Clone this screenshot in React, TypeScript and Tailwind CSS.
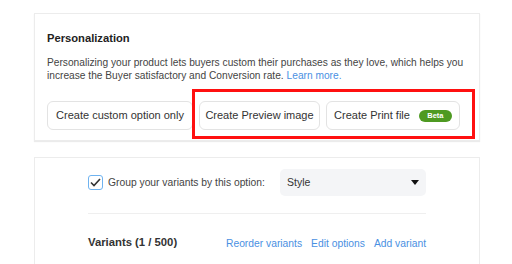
import React from "react";

const font = { fontFamily: '"Liberation Sans", Arial, sans-serif' };

const OptionButton: React.FC<{ label: string; width: string; badge?: boolean }> = ({
  label,
  width,
  badge,
}) => (
  <button
    className={`h-[29px] ${width} flex items-center justify-center gap-[9px] rounded-[6px] border border-[#e3e3e3] bg-white text-[11px] text-[#333] shrink-0`}
  >
    <span>{label}</span>
    {badge && (
      <span className="h-[12px] w-[33px] rounded-full bg-[#4e9a22] text-white text-[7.5px] font-bold leading-[12px] text-center">
        Beta
      </span>
    )}
  </button>
);

export default function App() {
  return (
    <div className="w-[512px] h-[264px] bg-white overflow-hidden" style={font}>
      <div className="pt-[13px] pl-[34px]">
        {/* Personalization card */}
        <div className="relative w-[446px] h-[128px] border border-[#ececec] shadow-[0_1px_1px_rgba(0,0,0,0.08)] bg-white px-[12px] pt-[16px]">
          <h2 className="text-[11.2px] leading-[16px] font-semibold text-[#222]">Personalization</h2>
          <p className="mt-[10px] text-[10.2px] leading-[13px] text-[#444] whitespace-nowrap">
            Personalizing your product lets buyers custom their purchases as they love, which helps you
            <br />
            increase the Buyer satisfactory and Conversion rate.{" "}
            <span className="text-[#4a90e2]">Learn more.</span>
          </p>
          <div className="mt-[19px] flex gap-[6px]">
            <OptionButton label="Create custom option only" width="w-[146px]" />
            <OptionButton label="Create Preview image" width="w-[121px]" />
            <OptionButton label="Create Print file" width="w-[134px]" badge />
          </div>
          <div className="absolute left-[157px] top-[75px] w-[283px] h-[50px] border-[3px] border-[#ff1010] pointer-events-none" />
        </div>

        {/* Variants card */}
        <div className="mt-[16px] w-[446px] h-[120px] border border-[#ececec] bg-white px-[53px] pt-[11px]">
          <div className="flex items-center">
            <div className="w-[15px] h-[15px] rounded-[3px] border border-[#6fb3f0] bg-white flex items-center justify-center">
              <svg width="11" height="9" viewBox="0 0 11 9">
                <path d="M1 4.5 L4 7.5 L10 1" fill="none" stroke="#333" strokeWidth="1.6" />
              </svg>
            </div>
            <span className="ml-[5px] text-[10.3px] text-[#444]">Group your variants by this option:</span>
            <div className="ml-auto w-[146px] h-[27px] rounded-[5px] bg-[#f4f5f7] flex items-center justify-between pl-[7px] pr-[7px]">
              <span className="text-[10.5px] text-[#333]">Style</span>
              <svg width="8" height="5" viewBox="0 0 8 5">
                <path d="M0 0 L8 0 L4 5 Z" fill="#111" />
              </svg>
            </div>
          </div>
          <div className="mt-[17px] border-t border-[#efefef]" />
          <div className="mt-[20px] flex items-center">
            <span className="text-[11.3px] font-semibold text-[#333]">Variants (1 / 500)</span>
            <div className="ml-auto flex gap-[9px] text-[10.3px] text-[#4a90e2] pt-[2px]">
              <span>Reorder variants</span>
              <span>Edit options</span>
              <span>Add variant</span>
            </div>
          </div>
        </div>
      </div>
    </div>
  );
}
